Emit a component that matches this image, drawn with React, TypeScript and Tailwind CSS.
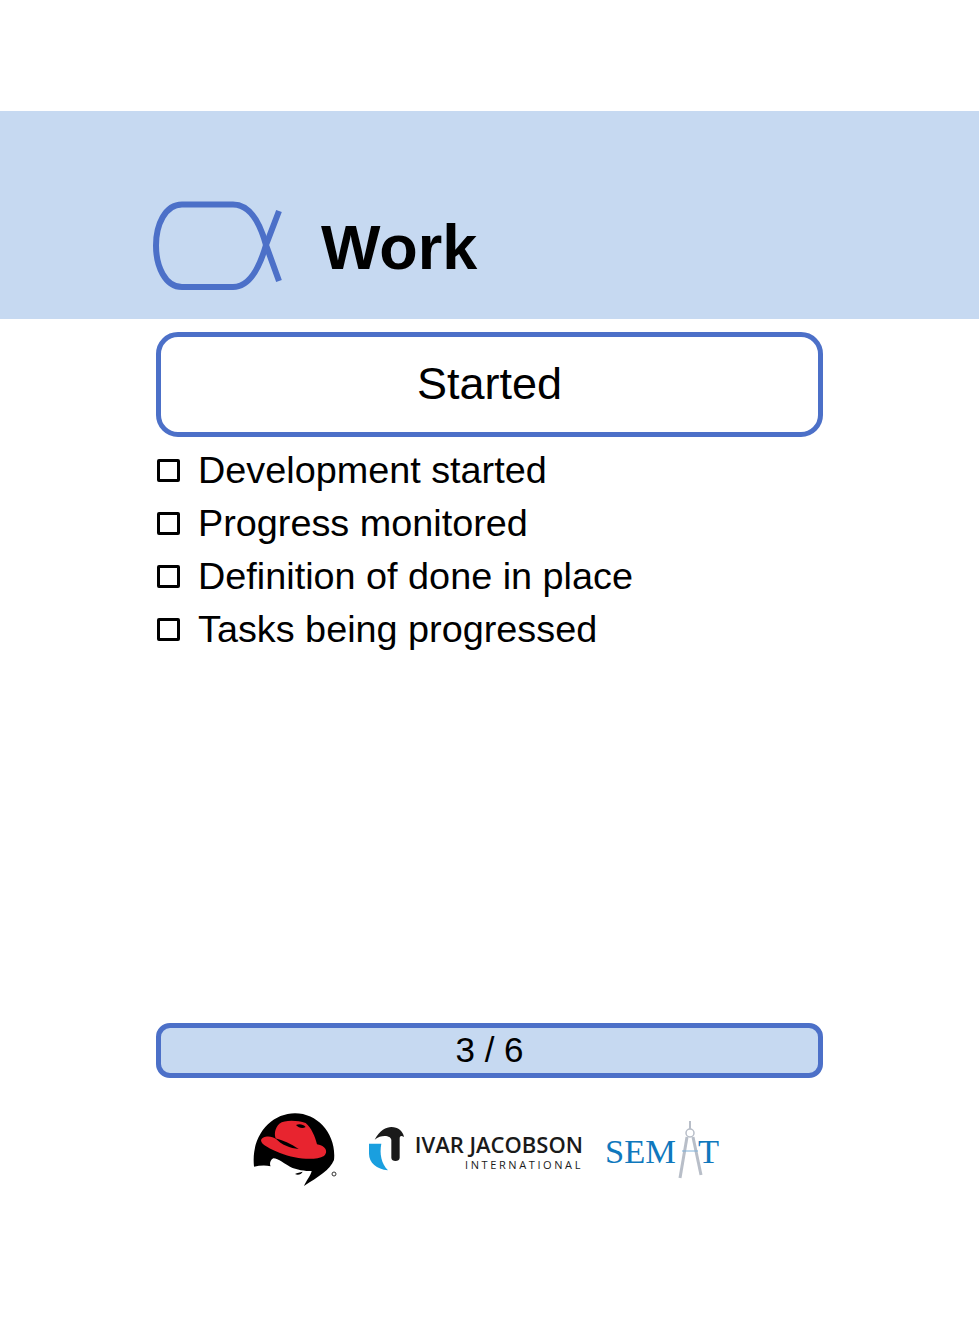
const items = [
  'Development started',
  'Progress monitored',
  'Definition of done in place',
  'Tasks being progressed',
];

const AlphaIcon = () => (
  <svg width="135" height="96" viewBox="0 0 135 96" fill="none" stroke="#4c70c8" strokeWidth="6">
    <path d="M32 6.5H83C100 6.5 110 25 116 47C110 68 100 89 83 89H32C15 89 6 68 6 47.5C6 27 15 6.5 32 6.5Z" />
    <path d="M129 13L116 47L129 83" />
  </svg>
);

const RedHatLogo = () => (
  <svg width="100" height="85" viewBox="0 0 300 255">
    <path
      d="M42 185C32 90 95 25 165 25C235 25 290 90 282 165C270 195 235 215 192 243C200 225 212 212 215 198C195 198 170 195 150 185C135 178 115 160 100 160C90 165 88 178 92 184C75 180 58 182 42 185Z"
      fill="#000"
    />
    <path
      d="M118 56C135 44 172 46 197 54C214 68 226 96 231 118C257 122 266 140 252 153C225 168 165 162 120 144C92 132 63 120 63 106C66 92 95 91 108 102C102 88 104 70 118 56Z"
      fill="#e8242f"
    />
    <path d="M106 100C128 106 152 116 176 132C150 130 125 120 106 100Z" fill="#000" />
    <path d="M168 60C178 55 190 58 197 66C188 71 176 69 168 60Z" fill="#000" />
    <path d="M165 207C172 202 180 203 188 200C184 208 174 212 165 207Z" fill="#000" />
    <circle cx="282" cy="207" r="6" fill="none" stroke="#333" strokeWidth="3" />
  </svg>
);

const IjiMark = () => (
  <svg width="37" height="44" viewBox="0 0 111 132">
    <path d="M20 38C35 10 55 0 70 0C90 0 105 12 108 30C98 24 95 28 95 35V92C95 105 70 105 70 92V40C70 25 40 22 20 38Z" fill="#1a1a1a" />
    <path d="M3 50H40C34 80 40 110 60 130C26 126 3 108 3 80Z" fill="#1a9fdf" />
  </svg>
);

const CompassMark = () => (
  <svg width="30" height="60" viewBox="0 0 30 60" fill="none" stroke="#b8bec8">
    <path d="M14 1V9" strokeWidth="2" />
    <circle cx="14" cy="13" r="4" strokeWidth="1.5" />
    <path d="M11 17L4 58" strokeWidth="3" />
    <path d="M17 17L25 55" strokeWidth="3" />
    <path d="M6 31H22" stroke="#7fb0d8" strokeWidth="1" />
  </svg>
);

export default function App() {
  return (
    <div className="min-h-screen bg-white pt-[111px] font-['Liberation_Sans',Arial,sans-serif] text-black">
      <header className="flex h-[208px] items-end gap-[36px] bg-[#c6d9f1] pb-[25px] pl-[150px]">
        <AlphaIcon />
        <h1 className="mb-[12px] text-[63px] leading-[70px] font-bold">Work</h1>
      </header>

      <main className="mx-auto w-[667px]">
        <div className="mt-[13px] flex h-[105px] items-center justify-center rounded-[22px] border-[5px] border-[#4c70c8] pb-[2px] text-[45px]">
          Started
        </div>

        <ul className="mt-[7px] h-[579px]">
          {items.map((item) => (
            <li key={item} className="flex h-[53px] items-center text-[37.8px]">
              <span className="ml-[1px] h-[23px] w-[23px] rounded-[2px] border-[3px] border-black" />
              <span className="ml-[18px]">{item}</span>
            </li>
          ))}
        </ul>

        <div className="flex h-[55px] items-center justify-center rounded-[14px] border-[5px] border-[#4c70c8] bg-[#c6d9f1] text-[35px]">
          3 / 6
        </div>

        <div className="mt-[27px] flex items-start pl-[84px]">
          <RedHatLogo />
          <div className="mt-[22px] ml-[28px]">
            <IjiMark />
          </div>
          <div className="mt-[27px] ml-[8px] flex w-[170px] flex-col items-end font-['Open_Sans',sans-serif] text-[#1a1a1a]">
            <span className="text-[22px] leading-[24px] font-semibold whitespace-nowrap">IVAR JACOBSON</span>
            <span className="mt-[2px] text-[11px] leading-[13px] tracking-[2.6px] whitespace-nowrap">INTERNATIONAL</span>
          </div>
          <div className="mt-[15px] ml-[22px] flex items-center font-['Liberation_Serif',serif] text-[34.5px] text-[#0f78bd]">
            <span className="pt-[4px]">SEM</span>
            <CompassMark />
            <span className="-ml-[8px] pt-[4px]">T</span>
          </div>
        </div>
      </main>
    </div>
  );
}
